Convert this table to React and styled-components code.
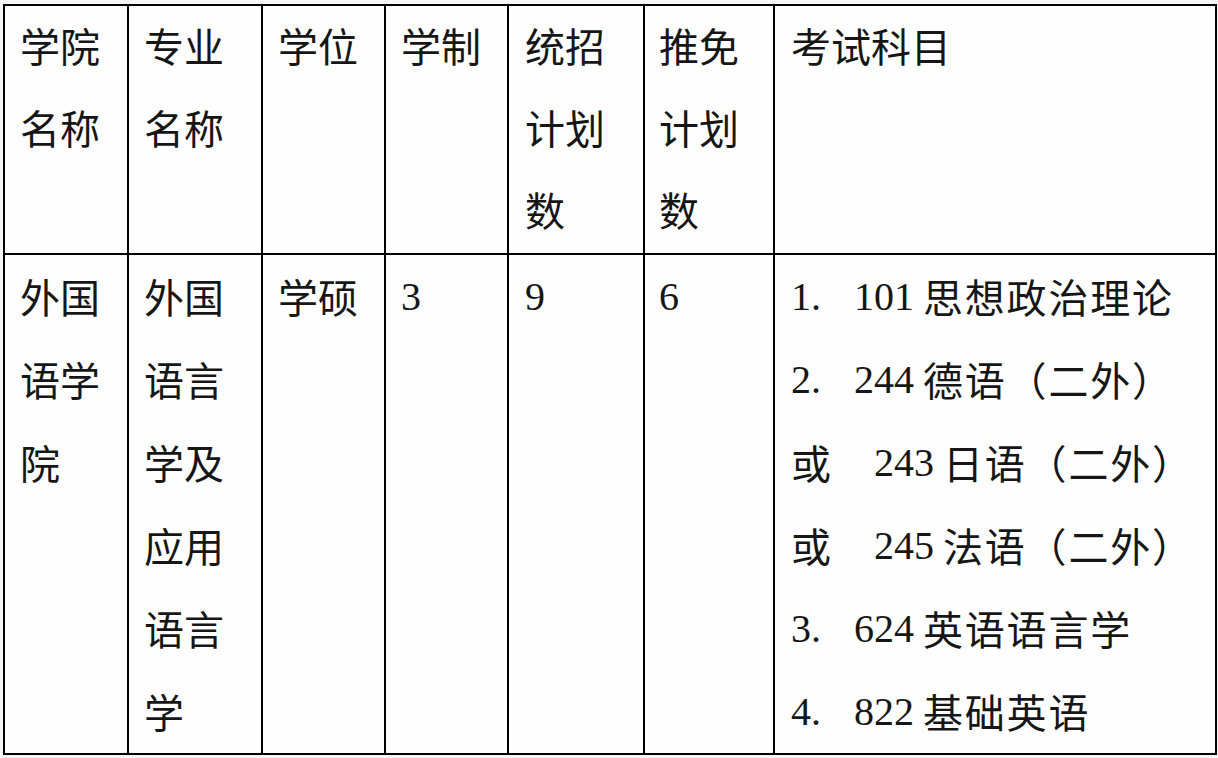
import styled, { createGlobalStyle } from 'styled-components';

const GlobalStyle = createGlobalStyle`
  html, body {
    margin: 0;
    padding: 0;
    background: #f5f6f5;
  }
  body {
    font-family: "Liberation Serif", "Noto Sans CJK SC", serif;
    color: #161616;
  }
`;

const Page = styled.div`
  width: 1218px;
  height: 758px;
  padding: 4px 0 0 3px;
  box-sizing: border-box;
  overflow: hidden;
`;

const Table = styled.table`
  border-collapse: collapse;
  table-layout: fixed;
  width: 1212px;
  font-size: 40px;
  background: #fefefe;
`;

const Cell = styled.td`
  border: 2px solid #000;
  vertical-align: top;
  padding: 0 4px 0 ${(p) => p.$pl || 15}px;
  white-space: nowrap;
  overflow: hidden;
`;

const Line = styled.div`
  box-sizing: border-box;
  height: ${(p) => p.$h}px;
  padding-top: ${(p) => p.$down || 0}px;
  padding-bottom: ${(p) => p.$up || 0}px;
  display: flex;
  align-items: center;
`;

const Marker = styled.span`
  display: inline-block;
  width: ${(p) => p.$w}px;
  flex: none;
`;

const Code = styled.span`
  margin-right: 9px;
`;

const Subject = styled.span`
  letter-spacing: 1.8px;
`;

const cols = [124, 134, 123, 123, 136, 130, 442];
const pads = [15, 15, 15, 15, 16, 14, 16];
const HEAD_LINE = 82.3;
const BODY_LINE = 83;

const header = [
  ['学院', '名称'],
  ['专业', '名称'],
  ['学位'],
  ['学制'],
  ['统招', '计划', '数'],
  ['推免', '计划', '数'],
  ['考试科目'],
];

const body = [
  ['外国', '语学', '院'],
  ['外国', '语言', '学及', '应用', '语言', '学'],
  ['学硕'],
  ['3'],
  ['9'],
  ['6'],
];

const subjects = [
  { mark: '1.', w: 63, code: '101', name: '思想政治理论' },
  { mark: '2.', w: 63, code: '244', name: '德语（二外）' },
  { mark: '或', w: 83, code: '243', name: '日语（二外）' },
  { mark: '或', w: 83, code: '245', name: '法语（二外）' },
  { mark: '3.', w: 63, code: '624', name: '英语语言学' },
  { mark: '4.', w: 63, code: '822', name: '基础英语' },
];

export default function App() {
  return (
    <Page>
      <GlobalStyle />
      <Table>
        <colgroup>
          {cols.map((w, i) => (
            <col key={i} style={{ width: w }} />
          ))}
        </colgroup>
        <tbody>
          <tr>
            {header.map((lines, i) => (
              <Cell key={i} $pl={pads[i]}>
                {[0, 1, 2].map((j) => (
                  <Line key={j} $h={HEAD_LINE} $up={5}>{lines[j] || ''}</Line>
                ))}
              </Cell>
            ))}
          </tr>
          <tr>
            {body.map((lines, i) => (
              <Cell key={i} $pl={pads[i]}>
                {[0, 1, 2, 3, 4, 5].map((j) => (
                  <Line key={j} $h={BODY_LINE}>{lines[j] || ''}</Line>
                ))}
              </Cell>
            ))}
            <Cell $pl={pads[6]}>
              {subjects.map((s) => (
                <Line key={s.code} $h={BODY_LINE}>
                  <Marker $w={s.w}>{s.mark}</Marker>
                  <Code>{s.code}</Code>
                  <Subject>{s.name}</Subject>
                </Line>
              ))}
            </Cell>
          </tr>
        </tbody>
      </Table>
    </Page>
  );
}
